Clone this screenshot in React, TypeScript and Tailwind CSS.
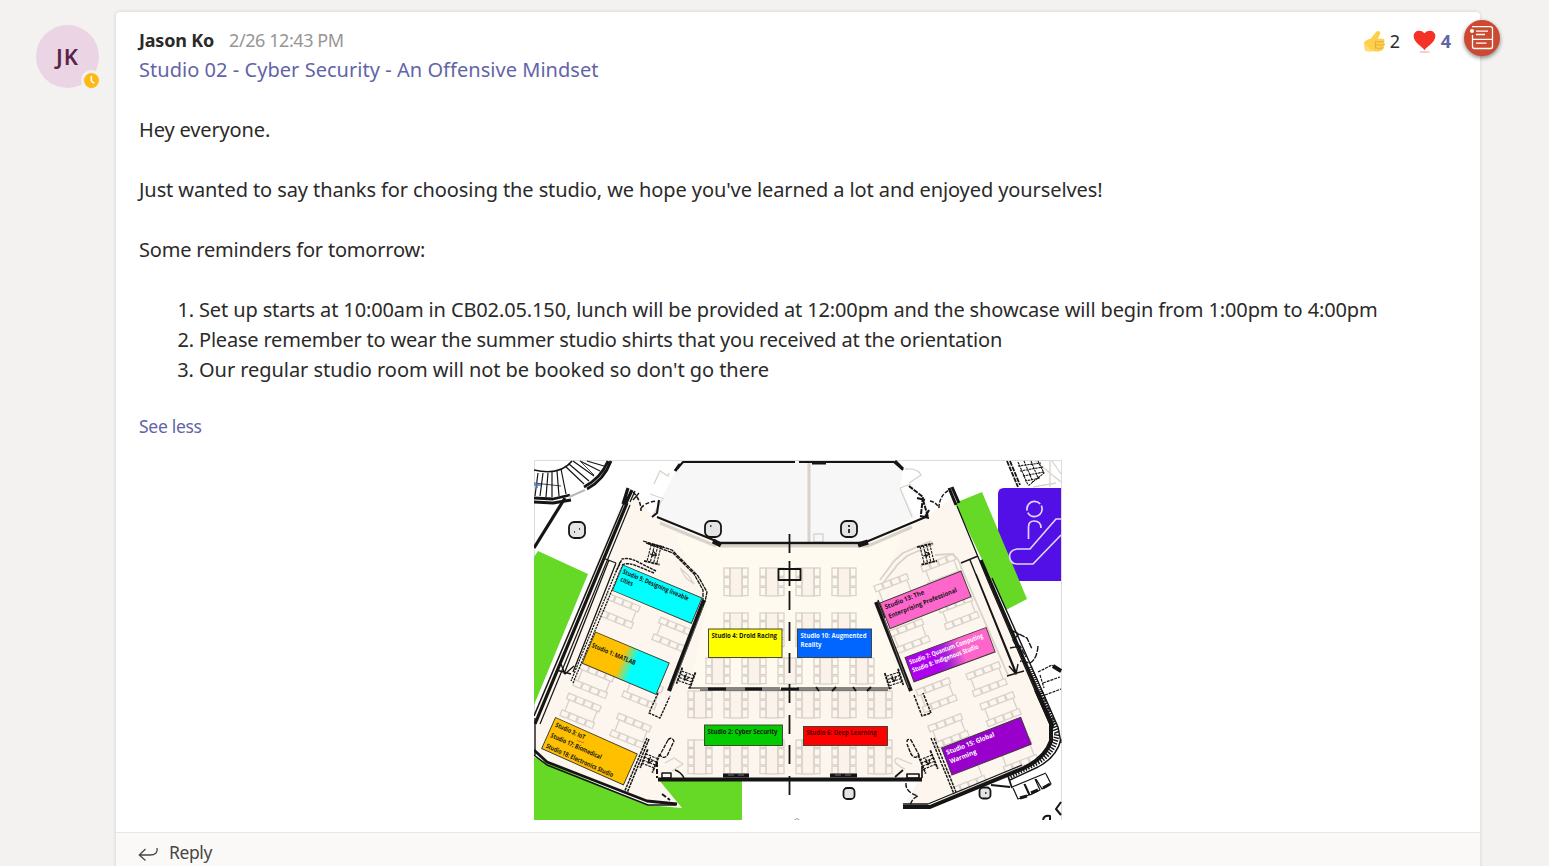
import React from "react";

type Pt = [number, number];

const INK = "#151515";

/* ---------- floor plan parts ---------- */

function DeskColumn({ x, y, h }: { x: number; y: number; h: number }) {
  const n = Math.max(2, Math.round(h / 9));
  const step = h / n;
  return (
    <g>
      {Array.from({ length: n }, (_, i) => (
        <rect key={i} x={x} y={y + i * step} width={6} height={step - 1.4} />
      ))}
    </g>
  );
}

function CentreTable({ x, y, h }: { x: number; y: number; h: number }) {
  return (
    <g>
      <rect x={x + 6} y={y} width={12} height={h - 1} fill="#fbf2ea" />
      <DeskColumn x={x} y={y} h={h} />
      <DeskColumn x={x + 18} y={y} h={h} />
    </g>
  );
}

function WingTable({ x, y, a }: { x: number; y: number; a: number }) {
  return (
    <g transform={`translate(${x} ${y}) rotate(${a})`}>
      <path d="M-15 -6V6M15 -6V6" />
      {[-12, 6].map((r) =>
        [-18, -9, 0, 9].map((c) => <rect key={`${r}${c}`} x={c} y={r} width={8} height={6} />),
      )}
    </g>
  );
}

interface BoothProps {
  at: Pt;
  w: number;
  h: number;
  a?: number;
  fill: string;
  color?: string;
  lines: { t: string; x: number; y: number; len: number }[];
}

function Booth({ at, w, h, a = 0, fill, color = "#161616", lines }: BoothProps) {
  return (
    <g transform={`translate(${at[0]} ${at[1]}) rotate(${a})`}>
      <rect width={w} height={h} fill={fill} stroke="#3a3a2c" strokeWidth={0.9} />
      {lines.map((l) => (
        <text
          key={l.t}
          x={l.x}
          y={l.y}
          textLength={l.len}
          lengthAdjust="spacingAndGlyphs"
          fill={color}
          className="font-['Open_Sans',sans-serif] text-[6.6px] font-bold"
        >
          {l.t}
        </text>
      ))}
    </g>
  );
}

function Column({ x, y, r = 8 }: { x: number; y: number; r?: number }) {
  return (
    <rect
      x={x - r}
      y={y - r}
      width={2 * r}
      height={2 * r}
      rx={r * 0.65}
      fill="#e4e4e4"
      stroke={INK}
      strokeWidth={1.8}
    />
  );
}

function Stairs({ x, y, a, w = 16, h = 18 }: { x: number; y: number; a: number; w?: number; h?: number }) {
  return (
    <g transform={`translate(${x} ${y}) rotate(${a})`} stroke={INK} fill="none">
      <path d={`M${-w / 2} ${-h / 2}H${w / 2}M${-w / 2} ${h / 2}H${w / 2}`} strokeWidth={1.8} strokeDasharray="3 .7" />
      <path
        d={`M-5 ${-h / 2}V${h / 2}M-1.6 ${-h / 2}V${h / 2}M1.8 ${-h / 2}V${h / 2}M5 ${-h / 2}V${h / 2}`}
        strokeWidth={1.1}
        strokeDasharray="2.6 1"
      />
      <path d="M-4 1H3M-2 -3L2 0L-2 3" strokeWidth={1.2} />
    </g>
  );
}

const wingTables: [number, number, number][] = [
  [620, 611, 22], [673, 635, 22], [594, 681, 22], [643, 692, 22], [581, 711, 22], [631, 731, 22],
  [895, 591, -21], [942, 571, -21], [910, 636, -21], [959, 612, -21], [987, 679, -21], [937, 695, -21],
  [1001, 709, -21], [949, 731, -21], [1018, 755, -21], [966, 776, -21],
];

function FloorPlan() {
  return (
    <svg viewBox="534 460 528 360" className="block h-[360px] w-[528px]" role="img" aria-label="Studio floor plan">
      <defs>
        <linearGradient id="amberCyan">
          <stop offset=".43" stopColor="#ffc000" />
          <stop offset=".6" stopColor="#00ffff" />
        </linearGradient>
        <linearGradient id="violetPink">
          <stop offset=".3" stopColor="#ae00ee" />
          <stop offset=".46" stopColor="#a421d8" />
          <stop offset=".66" stopColor="#ff66cc" />
        </linearGradient>
      </defs>
      <rect x="534" y="460" width="528" height="360" fill="#fff" />
      <path d="M534.500 820V460.500H1061.500V820" fill="none" stroke="#dcdcdc" />

      {/* floor areas */}
      <path d="M627 489L634 492L653 517L716 543H868L928 516L952 497L1040 700L1053 738L1023 769L930 805L903 807L920 778H658L682 808L647 803L547 762L534 753V716Z" fill="#fdf6ee" />
      <path d="M716 543H868L905 526L880 590L873 603L903 688H690L707 603L693 578L676 534Z" fill="#fffaf0" />
      <path d="M677 469L683 462H897L903 469L900 488L915 517L868 542H716L653 517L662 498Z" fill="#f7f7f7" />
      <path d="M538 551L588 574L534 705V557Z" fill="#66d926" />
      <path d="M534 757L647 805L682 808L659 780H742V820H534Z" fill="#66d926" />
      <path d="M1061 488H1004Q998 488 998 494V581H1061Z" fill="#520fe6" />
      <path d="M955 503L982 492L1027 599L1006 610Z" fill="#66d926" />
      <g fill="none" stroke="#ded8fc" strokeWidth="1.7">
        <circle cx="1034.5" cy="509" r="7.6" strokeDasharray="20 2" />
        <path d="M1028.500 539V527Q1028.500 521 1034 521Q1041 521 1041 528" />
        <path d="M1061 519H1056L1030 549H1017Q1010 550 1009.500 556Q1010 564 1017 564H1033L1061 535" />
      </g>

      {/* furniture */}
      <g fill="none" stroke="#d9d2cb" strokeWidth="1.3">
        {[724, 760, 796, 832].map((x) => (
          <g key={x}>
            <CentreTable x={x} y={568} h={29} />
            <CentreTable x={x} y={613} h={35} />
            <CentreTable x={x} y={740} h={35} />
          </g>
        ))}
        {[706, 742, 778, 814, 850].map((x) => (
          <CentreTable key={x} x={x} y={658} h={27} />
        ))}
        {[688, 724, 760, 796, 832, 868].map((x) => (
          <CentreTable key={x} x={x} y={691} h={28} />
        ))}
        <CentreTable x={688} y={740} h={35} />
        <CentreTable x={868} y={740} h={35} />
        {wingTables.map(([x, y, a]) => (
          <WingTable key={`${x}-${y}`} x={x} y={y} a={a} />
        ))}
        <path d="M680 568L688 575L694 584L686 578Z M814 534H823V542H814Z" />
        <path d="M880 580L894 561L903 553L931 541M883 583L898 564L907 556L934 544M887 578L896 567M935 555L951 554Q959 557 961 567L1008 675" strokeWidth="1.8" />
        <path d="M809 462V542" strokeWidth="3" />
        <path d="M720 546H868L912 527M660 523L716 546" strokeWidth="3" />
        <path d="M654 484L660 471L668 476L669 473M650 494L664 499M653 515L662 500M900 488L911 484M900 488L912 517M905 469Q918 468 921 475L909 483M665 763L674 758L683 764L672 771M905 769Q890 762 897 758L912 764" />
        <path d="M1035 461L1061 482M1052 461L1061 474M1033 487L1056 483M1050 461V487" />
      </g>

      {/* walls */}
      <g fill="none" stroke={INK} strokeLinejoin="round">
        <path d="M624 503L534 716" strokeWidth="1.5" />
        <path d="M627 503L535 724" strokeWidth="3.2" />
        <path d="M630 505L540 724" strokeWidth="1.2" />
        <path d="M535 718V755" strokeWidth="1.4" />
        <path d="M628 488L623 504M632 490L625 505" strokeWidth="3.2" />
        <path d="M635 491L630 502M639 493L633 500" strokeWidth="1.3" />
        <path d="M603 558L616 563M609 560L564 674M616 563L573 672M556 670L571 674M561 664L565 674L574 666" strokeWidth="1.3" />
        <path d="M620 562L571 681M623 564L573 683" strokeWidth="1.2" strokeDasharray="2.2 .9" />
        <path d="M656 571L640 563Q630 557 622 559L616 572M654 573L637 566Q627 562 622 565" strokeWidth="1.4" strokeDasharray="3 .8" />
        <path d="M643 541L672 550L698 576L707 592L705 602M646 543L673 553L694 574L703 590V603" strokeWidth="1.3" strokeDasharray="4 .7" />
        <path d="M704 600L669 691" strokeWidth="4.200" />
        <path d="M703.500 606L672 688" stroke="#77736f" strokeWidth=".8" />
        <path d="M657 517L716 541M652 517L657 513L659 500" strokeWidth="2.1" />
        <path d="M633 492Q641 500 641 511M641 508Q646 502 657 501" strokeDasharray="4 2" strokeWidth="1.5" />
        <path d="M677 469L683 462H795M799 462H894L903 470" strokeWidth="2" />
        <path d="M812 463H826" strokeWidth="3" />
        <path d="M675 471L680 464M895 461L903 469" strokeWidth="3" />
        <path d="M718 543H861" strokeWidth="2.6" />
        <path d="M713 541L721 545M858 545L868 542" strokeWidth="5" />
        <path d="M866 542L928 516M925 517L929 510" strokeWidth="2.2" />
        <path d="M909 486L923 497L921 514M917 498L925 500M923 500L928 517M920 516L929 518" strokeWidth="2" strokeDasharray="5 1" />
        <path d="M930 501Q936 502 939 508M939 508Q939 496 949 490" strokeWidth="1.4" strokeDasharray="4 1.500" />
        <path d="M949 488L956 505M952 487L959 503" strokeWidth="3" />
        <path d="M957 506L988 581L1050 725" strokeWidth="1.3" />
        <path d="M981 560L1053 727" strokeWidth="3.200" />
        <path d="M992 578L1048 704L1058 727L1061 743" strokeWidth="1.4" />
        <path d="M961 563L978 556M970 560L1015 672M976 574L1016 672M1007 676L1024 671M1009 666L1016 674L1018 664" strokeWidth="1.4" />
        <path d="M876 602L911 691" strokeWidth="4" />
        <path d="M879 604L909 688" stroke="#84807b" strokeWidth=".8" />
        <path d="M878 600L885 618" strokeWidth="1.3" />
        <path d="M688 688H780M797 688H892M700 690H888" strokeWidth="1.2" />
        <path d="M708 689H726M745 689H762M781 689H799" strokeWidth="3.2" />
        <path d="M816 687L819 691M832 691L836 687M853 687L856 691M867 691L871 687" strokeWidth="1.8" />
        <path d="M658 779.500H922" strokeWidth="4.200" />
        <path d="M723 775.500H749M830 775.500H857" strokeWidth="4" />
        <path d="M728 775H734M738 775H744M835 775H841M845 775H851" stroke="#77736e" strokeWidth="1" />
        <path d="M789.500 534V553M789.500 561V586M789.500 591V610M789.500 622V641M789.500 653V673M789.500 684V703M789.500 715V734M789.500 745V764M789.500 776V795" strokeWidth="1.8" />
        <path d="M778.500 569H800.500V580H778.500Z" strokeWidth="1.8" />
        <path d="M534 750L547 762L647 801L677 804" strokeWidth="2.8" />
        <path d="M534 755L547 765L648 805H676" strokeWidth="1.4" />
        <path d="M649 739L627 793M647 738L624 793" strokeWidth="1.5" strokeDasharray="2.8 .8" />
        <path d="M658 693L649 713L660 718L670 696" strokeWidth="1.4" strokeDasharray="2.6 1" />
        <path d="M668 740Q671 736 674 741L667 756Q663 759 660 755Z" strokeWidth="1.3" strokeDasharray="4 1" />
        <path d="M662 773H671V778H662ZM675 770Q681 772 684 778" strokeWidth="1.5" />
        <path d="M657 762V778M662 794L670 800" strokeWidth="2" strokeDasharray="5 2" />
        <path d="M914 695L922 716L931 713L923 693" strokeWidth="1.5" strokeDasharray="3 1" />
        <path d="M931 738L954 794M934 738L956 792" strokeWidth="1.4" strokeDasharray="3 1" />
        <path d="M907 742Q907 738 911 740L919 755Q915 760 911 754L907 744" strokeWidth="1.4" strokeDasharray="4 1" />
        <path d="M907 774H919V778H907ZM895 777L903 770M922 778V766" strokeWidth="1.7" />
        <path d="M906 783Q905 792 918 796Q912 798 910 806" strokeWidth="1.4" strokeDasharray="5 1.500" />
        <path d="M903 807H930L1024 768Q1045 758 1051 741V723L1036 690" strokeWidth="4" />
        <path d="M903 804H928L1022 765" strokeWidth="1.3" />
        <path d="M1010 780L1038 767Q1057 757 1061 739" strokeWidth="1.4" />
        <path d="M1010 776L1036 763Q1055 752 1057 733L1040 691" strokeWidth="5.500" strokeDasharray="1.4 1.400" />
        <path d="M1013 788L1018 799L1029 795L1024 784M1025 784L1030 795L1040 790L1035 779M1036 779L1042 789L1051 784L1046 774M1012 787L1046 773" strokeWidth="1.2" />
        <path d="M1020 798L1027 796M1031 793L1038 790M1043 788L1050 784" strokeWidth="3" />
        <path d="M991 785L1010 787M1008 776L1012 788" strokeWidth="1.8" />
        <path d="M1013 631L1027 638L1032 649M1010 648L1020 646L1026 657M1019 634L1013 640L1017 648M1038 646Q1037 659 1030 663L1020 661" strokeWidth="1.4" strokeDasharray="6 1" />
        <path d="M1030 667L1054 725" strokeWidth="4.500" strokeDasharray="1 1.200" />
        <path d="M1038 672L1052 665L1061 672M1043 683L1060 677M1045 695L1061 689M1040 675L1044 688" strokeWidth="1.2" strokeDasharray="3 1" />
        <path d="M1053 666L1061 671" strokeWidth="4" />
        <path d="M1061 802L1056 809L1061 815M1043 820Q1044 815 1050 816V820" strokeWidth="2" />

        {/* stairwells at the upper corners */}
        <path d="M534 498L553 499L570 495M534 502L553 503L571 500" strokeWidth="2.8" />
        <path d="M584 487Q601 478 608 461M587 489Q604 480 611 461" strokeWidth="2.8" />
        <path d="M534 470Q560 476 572 461" strokeWidth="1.6" />
        <path d="M534 483L561 486" strokeWidth=".8" />
        <path d="M538 473L535 496M543 473L540 496M548 473L546 497M552 472L552 497M557 471L559 496M561 469L566 494M565 466L584 484M569 464L589 481M573 461L594 476M580 461L600 471M587 461L604 466" strokeWidth="1.2" />
        <path d="M581 462L594 475" strokeWidth=".8" />
        <path d="M569 497L585 490" stroke="#b9b9b9" strokeWidth="2" />
        <path d="M534 485H541M537 482V488" stroke="#4b79b8" strokeWidth="1.4" />
        <path d="M565 498L534 548" strokeWidth="3.200" />
        <path d="M1007 461L1018 487M1010 461L1020 485" strokeWidth="1.8" strokeDasharray="5 1" />
        <path d="M1018 462L1028 485M1018 466L1041 463M1020 471L1043 467M1023 476L1044 472M1025 481L1040 478M1024 461L1033 482M1031 461L1038 478M1038 461L1044 473L1028 486" strokeWidth="1.1" strokeDasharray="2.4 .7" />
      </g>

      <Stairs x={654} y={554} a={14} />
      <Stairs x={927} y={554} a={-14} />
      <Stairs x={686} y={678} a={110} w={17} h={14} />
      <Stairs x={894} y={679} a={72} w={17} h={14} />
      <Stairs x={650} y={761} a={112} w={20} h={13} />
      <Stairs x={928} y={762} a={68} w={20} h={13} />
      <Column x={577} y={530} />
      <Column x={713} y={529} />
      <Column x={849} y={529} />
      <Column x={849} y={793.5} r={5.5} />
      <Column x={985} y={793} r={5.5} />
      <path d="M574 532h1M579 529h1M710 526h1.500M849 525v2M849 529v4M985 793h1.500" stroke={INK} strokeWidth="1.7" />
      <path d="M794.500 820Q797 817 799.500 820" fill="none" stroke="#999" strokeWidth="1" />

      {/* booths */}
      <Booth at={[623, 565]} w={85.6} h={27.500} a={22.7} fill="#00ffff" lines={[{ t: "Studio 5: Designing liveable", x: 2.5, y: 8, len: 71 }, { t: "cities", x: 3.500, y: 16, len: 13 }]} />
      <Booth at={[595.5, 632]} w={80} h={34} a={22.8} fill="url(#amberCyan)" lines={[{ t: "Studio 1: MATLAB", x: 2, y: 15.5, len: 47 }]} />
      <Booth at={[555.5, 717.5]} w={89.500} h={34} a={24} fill="#ffc000" lines={[{ t: "Studio 3: IoT", x: 3, y: 8.5, len: 32 }, { t: "Studio 17: Biomedical", x: 3, y: 20, len: 55 }, { t: "Studio 18: Electronics Studio", x: 3, y: 31.5, len: 73 }]} />
      <path d="M577 740l2 1.500 1-.5 2 1.500 2-.2" fill="none" stroke="#e2571b" strokeWidth=".8" />
      <Booth at={[708.500, 629]} w={73.500} h={28.500} fill="#ffff00" lines={[{ t: "Studio 4: Droid Racing", x: 3, y: 8.5, len: 65.500 }]} />
      <Booth at={[797.500, 629]} w={74} h={28.500} fill="#0066ff" color="#eef5ff" lines={[{ t: "Studio 10: Augmented", x: 3, y: 8.5, len: 66 }, { t: "Reality", x: 3, y: 18, len: 21 }]} />
      <Booth at={[704.5, 725]} w={78} h={20.500} fill="#00cc00" lines={[{ t: "Studio 2: Cyber Security", x: 3, y: 8.5, len: 70 }]} />
      <Booth at={[803.5, 726.5]} w={84} h={19} fill="#ff0000" color="#520000" lines={[{ t: "Studio 6: Deep Learning", x: 3, y: 8, len: 70 }]} />
      <Booth at={[880, 603]} w={87} h={27.500} a={-21.5} fill="#ff66cc" lines={[{ t: "Studio 13:  The", x: 3, y: 8, len: 42 }, { t: "Enterprising Professional", x: 3, y: 18, len: 73 }]} />
      <Booth at={[905, 657.5]} w={86.500} h={26} a={-20.3} fill="url(#violetPink)" color="#fff" lines={[{ t: "Studio 7: Quantum Computing", x: 2.5, y: 8.5, len: 78 }, { t: "Studio 8: Indigenous Studio", x: 2.5, y: 17, len: 70 }]} />
      <Booth at={[941.5, 748]} w={85} h={29} a={-21.2} fill="#9900cc" color="#fff" lines={[{ t: "Studio 15:  Global", x: 3, y: 8.5, len: 51 }, { t: "Warming", x: 3, y: 18, len: 28 }]} />
    </svg>
  );
}

/* ---------- small icons ---------- */

function ThumbsUp() {
  return (
    <svg viewBox="0 0 24 24" className="size-[23px]">
      <path d="M1 13Q3 10 8 9L14 1.500Q17 0 18 2.500Q18 5 15.500 9H21Q23 10 22 13Q24 15 22 17Q22 20 20 21Q17 23.500 10 22Q6 23 2 21Z" fill="#ffcf4a" />
      <path d="M1 13Q4 17 2 21Q6 23 10 22Q6 18 1 13Z" fill="#ffdc77" />
      <path d="M13 12Q18 13 22 12M13 15.200Q18 16.500 22 15.200M13 18.500Q17 20 21 18.500M13 11.500V19.500" fill="none" stroke="#dfae42" strokeWidth="1" />
    </svg>
  );
}

function Heart() {
  return (
    <svg viewBox="0 0 24 26" className="h-[25px] w-[23px]">
      <ellipse cx="12" cy="24" rx="6" ry="1" fill="#f7c9c6" />
      <path d="M12 22C10 18.500 1 14.500 .7 7.500C.5 1.500 8 -.3 12 4.300C16 -.3 23.500 1.500 23.300 7.500C23 14.500 14 18.500 12 22Z" fill="#f63127" />
    </svg>
  );
}

function AnnouncementBadge() {
  return (
    <div className="absolute top-[20px] left-[1464px] size-9 rounded-full bg-[#cc4a31] shadow-[0_2px_4px_rgba(0,0,0,0.45)]">
      <svg viewBox="0 0 36 36" className="size-9" fill="none" stroke="#fff" strokeWidth="1.3">
        <path d="M8 6.700H26.500Q28.500 6.700 28.500 9V26.500Q28.500 28.500 26.500 28.500H10.500Q8.500 28.500 8.500 26.500V15M8.500 19.300H28.500" />
        <path d="M12 11.200H24M12 14.500H21M12 23.200H22.500" />
        <circle cx="8" cy="11" r="2" fill="#fff" stroke="none" />
      </svg>
    </div>
  );
}

export default function App() {
  return (
    <div className="relative flex h-[866px] w-[1549px] overflow-hidden bg-[#f3f2f1] font-['Noto_Sans','Open_Sans',sans-serif] text-[#2b2a29]">
      <div className="w-[116px] shrink-0 pt-[25px] pl-[36px]">
        <div className="relative flex size-[63px] items-center justify-center rounded-full bg-[#ebd4e3] text-[22px] font-semibold tracking-[1px] text-[#5a2348]">
          JK
          <div className="absolute top-[45px] left-[45px] size-5 rounded-full bg-[#f3f2f1] p-[2.500px]">
            <svg viewBox="0 0 15 15" className="size-[15px]">
              <circle cx="7.500" cy="7.500" r="7.500" fill="#fdb913" />
              <path d="M7.300 3V8L10.300 10.300" fill="none" stroke="#fff" strokeWidth="1.500" />
            </svg>
          </div>
        </div>
      </div>

      <div className="mt-3 flex h-[870px] w-[1364px] shrink-0 flex-col rounded-[4px] bg-white shadow-[0_0_3px_1px_rgba(0,0,0,0.09)]">
        <div className="h-[820px] shrink-0 px-[23px] pt-[13px]">
          <div className="flex h-[30px] items-center justify-between">
            <div className="flex items-center whitespace-nowrap">
              <span className="w-[90px] text-[18px] font-bold tracking-[-0.2px]">Jason Ko</span>
              <span className="text-[18px] tracking-[-0.42px] text-[#979593]">2/26 12:43 PM</span>
            </div>
            <div className="mr-[6px] flex items-center pt-[2px]">
              <ThumbsUp />
              <span className="ml-[4px] w-[23px] text-[18px]">2</span>
              <Heart />
              <span className="ml-[5px] text-[18px] font-bold text-[#6264a7]">4</span>
            </div>
          </div>
          <div className="whitespace-nowrap text-[20px] leading-[30px]">
            <h1 className="tracking-[0.04px] text-[#6264a7]">Studio 02 - Cyber Security - An Offensive Mindset</h1>
            <p className="mt-[30px] tracking-[-0.14px]">Hey everyone.</p>
            <p className="mt-[30px] tracking-[-0.095px]">Just wanted to say thanks for choosing the studio, we hope you've learned a lot and enjoyed yourselves!</p>
            <p className="mt-[30px] tracking-[-0.2px]">Some reminders for tomorrow:</p>
            <ol className="mt-[30px] list-decimal pl-[60px]">
              <li className="tracking-[-0.125px]">Set up starts at 10:00am in CB02.05.150, lunch will be provided at 12:00pm and the showcase will begin from 1:00pm to 4:00pm</li>
              <li className="tracking-[-0.195px]">Please remember to wear the summer studio shirts that you received at the orientation</li>
              <li className="tracking-[-0.05px]">Our regular studio room will not be booked so don't go there</li>
            </ol>
          </div>
          <button className="mt-[28px] block h-[26px] text-[17.500px] leading-[26px] tracking-[-0.3px] text-[#6264a7]">See less</button>
          <div className="mt-[21px] ml-[395px]">
            <FloorPlan />
          </div>
        </div>
        <div className="flex h-[50px] shrink-0 items-start border-t border-[#e8e6e5] bg-[#faf9f8] pt-[6px] pl-[22px] text-[#484644]">
          <svg viewBox="0 0 20 14" className="mt-[8px] h-[14px] w-5" fill="none" stroke="currentColor" strokeWidth="1.300">
            <path d="M19 1Q20 8 12 8H1.500M7.500 2L1.300 8L7.500 13.500" />
          </svg>
          <span className="ml-[11px] text-[17.500px] leading-[26px] tracking-[-0.4px]">Reply</span>
        </div>
      </div>
      <AnnouncementBadge />
    </div>
  );
}
